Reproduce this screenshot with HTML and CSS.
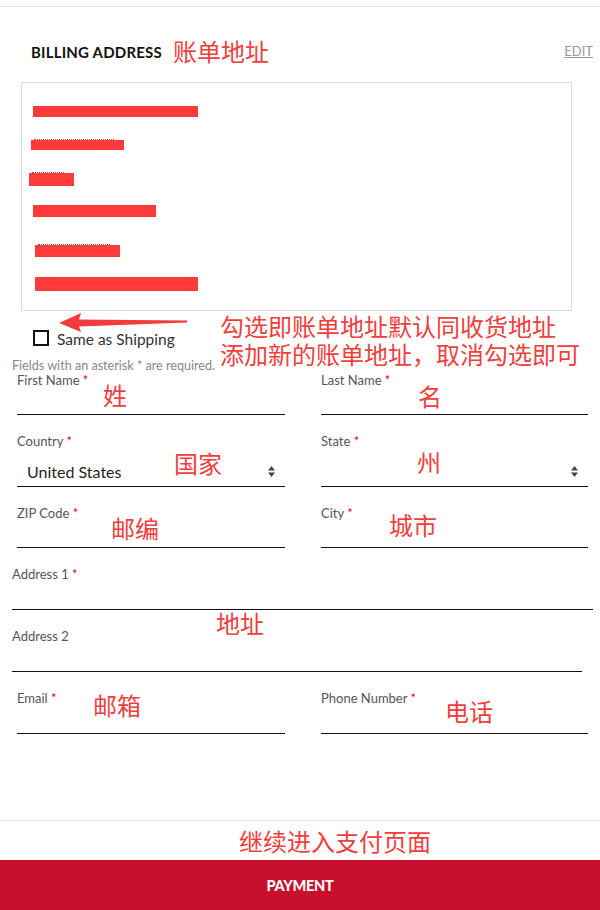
FILE: index.html
```html
<!DOCTYPE html>
<html lang="en">
<head>
<meta charset="utf-8">
<title>Billing Address</title>
<link rel="stylesheet" href="styles.css">
</head>
<body>
<div class="page">
  <div class="top-rule"></div>

  <div class="header">
    <div class="title">BILLING ADDRESS <span class="note-cn title-cn">账单地址</span></div>
    <a class="edit" href="#">EDIT</a>
  </div>

  <div class="address-box">
    <div class="redact r1"></div>
    <div class="redact r2 peek"></div>
    <div class="redact r3 peek"></div>
    <div class="redact r4"></div>
    <div class="redact r5 peek"></div>
    <div class="redact r6"></div>
  </div>

  <div class="check-area">
    <div class="check-row">
      <span class="checkbox"></span>
      <span class="check-label">Same as Shipping</span>
    </div>
    <div class="required-note">Fields with an asterisk * are required.</div>

    <svg class="arrow" width="130" height="20" viewBox="0 0 130 20">
      <polygon fill="#f23b3b" points="0,10 22,0 20,6.5 128,7.5 128,9.5 20,13.5 22,19"/>
    </svg>
    <div class="hint">
      <div class="note-cn hint-line">勾选即账单地址默认同收货地址</div>
      <div class="note-cn hint-line">添加新的账单地址，取消勾选即可</div>
    </div>
  </div>

  <div class="form">
    <div class="row two">
      <div class="field h42">
        <div class="label">First Name <span class="req">*</span></div>
        <span class="note-cn a-xing">姓</span>
      </div>
      <div class="field h42">
        <div class="label">Last Name <span class="req">*</span></div>
        <span class="note-cn a-ming">名</span>
      </div>
    </div>

    <div class="row two">
      <div class="field h53">
        <div class="label">Country <span class="req">*</span></div>
        <div class="select"><span class="value">United States</span>
          <svg class="updown" width="7" height="11" viewBox="0 0 7 11"><polygon fill="#444" points="0,4.5 3.5,0 7,4.5"/><polygon fill="#444" points="0,6.5 3.5,11 7,6.5"/></svg>
        </div>
        <span class="note-cn a-guojia">国家</span>
      </div>
      <div class="field h53">
        <div class="label">State <span class="req">*</span></div>
        <div class="select"><span class="value"></span>
          <svg class="updown" width="7" height="11" viewBox="0 0 7 11"><polygon fill="#444" points="0,4.5 3.5,0 7,4.5"/><polygon fill="#444" points="0,6.5 3.5,11 7,6.5"/></svg>
        </div>
        <span class="note-cn a-zhou">州</span>
      </div>
    </div>

    <div class="row two">
      <div class="field h42">
        <div class="label">ZIP Code <span class="req">*</span></div>
        <span class="note-cn a-youbian">邮编</span>
      </div>
      <div class="field h42">
        <div class="label">City <span class="req">*</span></div>
        <span class="note-cn a-chengshi">城市</span>
      </div>
    </div>

    <div class="row addr1">
      <div class="field h43">
        <div class="label">Address 1 <span class="req">*</span></div>
      </div>
    </div>

    <div class="row addr2">
      <div class="field h43">
        <div class="label">Address 2</div>
        <span class="note-cn a-dizhi">地址</span>
      </div>
    </div>

    <div class="row two">
      <div class="field h43">
        <div class="label">Email <span class="req">*</span></div>
        <span class="note-cn a-youxiang">邮箱</span>
      </div>
      <div class="field h43">
        <div class="label">Phone Number <span class="req">*</span></div>
        <span class="note-cn a-dianhua">电话</span>
      </div>
    </div>
  </div>

  <div class="footer">
    <div class="footer-note"><span class="note-cn">继续进入支付页面</span></div>
    <button class="pay">PAYMENT</button>
  </div>
</div>
</body>
</html>
```

FILE: styles.css
```css
* { box-sizing: border-box; }

html, body {
  margin: 0;
  padding: 0;
  background: #fff;
}

body {
  font-family: Lato, "Open Sans", "Liberation Sans", sans-serif;
  color: #222;
}

.page {
  width: 600px;
  height: 910px;
  position: relative;
  overflow: hidden;
  display: flex;
  flex-direction: column;
}

.note-cn {
  font-family: "Noto Sans CJK SC", "Noto Sans", sans-serif;
  color: #f23d3d;
  font-size: 24px;
  line-height: 24px;
  font-weight: 400;
  letter-spacing: 0;
}

.top-rule {
  margin-top: 6px;
  height: 1px;
  background: #e2e2e2;
}

.header {
  margin-top: 30px;
  height: 30px;
  display: flex;
  align-items: center;
  justify-content: space-between;
  padding: 0 7px 0 31px;
}

.title {
  font-size: 15px;
  font-weight: 700;
  color: #111;
  letter-spacing: 0.2px;
  display: flex;
  align-items: center;
  gap: 11px;
}

.title-cn {
  letter-spacing: 0;
  margin-top: -2px;
}

.edit {
  font-size: 13px;
  color: #999;
  text-decoration: underline;
  margin-top: -2px;
}

.address-box {
  margin: 15px 28px 0 21px;
  height: 229px;
  border: 1px solid #dcdcdc;
  display: flex;
  flex-direction: column;
  align-items: flex-start;
}

.redact {
  background: #fe3a3a;
  position: relative;
}

.peek::before {
  content: "";
  position: absolute;
  left: 3px;
  right: 10px;
  top: -1px;
  border-top: 1px dotted #666;
}

.r1 { margin: 23px 0 0 11px; width: 165px; height: 11px; }
.r2 { margin: 23px 0 0 9px;  width: 93px;  height: 10px; }
.r3 { margin: 23px 0 0 7px;  width: 45px;  height: 13px; }
.r4 { margin: 19px 0 0 11px; width: 123px; height: 12px; }
.r5 { margin: 28px 0 0 13px; width: 85px;  height: 12px; }
.r6 { margin: 20px 0 0 13px; width: 163px; height: 14px; }

.check-area {
  position: relative;
  margin-top: 19px;
}

.check-row {
  display: flex;
  align-items: center;
  padding-left: 33px;
  height: 16px;
}

.checkbox {
  width: 16px;
  height: 16px;
  border: 2px solid #111;
  background: #fff;
}

.check-label {
  margin-left: 8px;
  font-size: 15.5px;
  color: #333;
  margin-top: 2px;
}

.required-note {
  margin-top: 13px;
  padding-left: 12px;
  font-size: 12.6px;
  line-height: 14px;
  color: #888;
}

.arrow {
  position: absolute;
  left: 59px;
  top: -17px;
}

.hint {
  position: absolute;
  left: 220px;
  top: -16px;
  display: flex;
  flex-direction: column;
  gap: 4px;
}

.hint-line {
  white-space: nowrap;
}

.form {
  margin-top: -1px;
  display: flex;
  flex-direction: column;
  gap: 18px;
}

.row.two {
  display: grid;
  grid-template-columns: 268px 267px;
  column-gap: 36px;
  padding-left: 17px;
}

.row.addr1 { padding: 0 7px 0 12px; }
.row.addr2 { padding: 0 18px 0 12px; }

.field {
  position: relative;
  border-bottom: 1px solid #111;
}

.h42 { height: 43px; }
.h43 { height: 44px; }
.h53 { height: 54px; }

.label {
  font-size: 13px;
  line-height: 16px;
  color: #555;
}

.req { color: #c8102e; }

.select {
  margin-top: 12px;
  display: flex;
  align-items: center;
  justify-content: space-between;
  padding: 0 10px 0 10px;
  height: 20px;
}

.value {
  font-size: 16px;
  color: #222;
}

.updown { display: block; }

.field .note-cn { position: absolute; }

.a-xing     { left: 86px;  top: 11px; }
.a-ming     { left: 97px;  top: 12px; }
.a-guojia   { left: 157px; top: 18px; }
.a-zhou     { left: 96px;  top: 17px; }
.a-youbian  { left: 94px;  top: 11px; }
.a-chengshi { left: 68px;  top: 8px; }
.a-dizhi    { left: 204px; top: -17px; }
.a-youxiang { left: 76px;  top: 3px; }
.a-dianhua  { left: 124px; top: 9px; }

.footer {
  margin-top: auto;
  display: flex;
  flex-direction: column;
}

.footer-note {
  border-top: 1px solid #e2e2e2;
  height: 40px;
  display: flex;
  align-items: center;
  justify-content: center;
  padding-left: 70px;
}

.pay {
  height: 50px;
  border: 0;
  margin: 0;
  background: #c8102e;
  color: #fff;
  font-family: Lato, "Liberation Sans", sans-serif;
  font-weight: 900;
  font-size: 14.5px;
  letter-spacing: -0.3px;
  padding-left: 6px;
}
```
